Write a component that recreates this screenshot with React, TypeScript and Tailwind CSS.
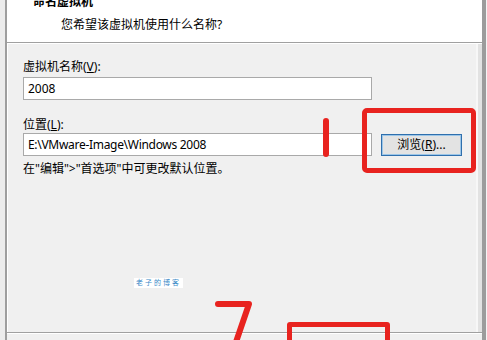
import React from "react";

const font = { fontFamily: '"Noto Sans", "Noto Sans CJK SC", sans-serif' };

export default function App() {
  return (
    <div
      className="relative w-[487px] h-[340px] overflow-hidden bg-[#ececec] text-[12px] text-black"
      style={font}
    >
      <div className="absolute inset-0 flex">
        <div className="w-[5px] bg-[#ececec]" />
        <div className="flex w-[477px] flex-col border-l-2 border-[#9e9e9e]">
          <div className="flex flex-1 flex-col">
            {/* header */}
            <div className="flex h-[42px] flex-col bg-white pr-[6px]">
              <div className="mt-[-6px] pl-[26px] font-bold leading-[16px]">命名虚拟机</div>
              <div className="mt-[7px] pl-[54px] leading-[16px]">您希望该虚拟机使用什么名称?</div>
            </div>
            <div className="h-px bg-[#a0a0a0]" />
            <div className="h-px bg-white" />
            {/* body */}
            <div className="flex flex-1">
              <div className="w-px bg-white" />
              <div className="flex flex-1 flex-col bg-[#f0f0f0] pl-[15px] pt-[15px]">
                <div className="leading-[16px]">
                  虚拟机名称(<span className="underline">V</span>):
                </div>
                <div className="mt-[2px] flex h-[23px] w-[349px] items-center border border-[#a9a9a9] bg-white pl-[4px]">
                  2008
                </div>
                <div className="mt-[17px] leading-[16px]">
                  位置(<span className="underline">L</span>):
                </div>
                <div className="flex items-center">
                  <div className="flex h-[23px] w-[349px] items-center border border-[#a9a9a9] bg-white pl-[4px] tracking-[-0.3px]">
                    E:\VMware-Image\Windows 2008
                  </div>
                  <div className="ml-[9px] mt-[1px] flex h-[22px] w-[81px] items-center justify-center border border-[#2f6fad] bg-[#e3e3e3] shadow-[inset_0_0_0_1px_#9cc6e8]">
                    浏览(<span className="underline">R</span>)...
                  </div>
                </div>
                <div className="mt-[5px] leading-[16px]">在"编辑"&gt;"首选项"中可更改默认位置。</div>
              </div>
              <div className="w-[2px] bg-[#f7f7f7]" />
              <div className="w-[4px] bg-[#e2e2e2]" />
            </div>
            <div className="h-px bg-[#a0a0a0]" />
            <div className="h-px bg-white" />
            <div className="h-[6px] bg-[#f0f0f0]" />
          </div>
        </div>
        <div className="w-[4px] bg-[#9c9c9c]" />
        <div className="flex-1 bg-[#f4f4f4]" />
      </div>

      {/* watermark */}
      <div className="absolute left-[134px] top-[278px] bg-white px-[2px] text-[7px] leading-[10px] tracking-[2px] text-[#3a8ac8]">
        老子的博客
      </div>

      {/* red annotations */}
      <div className="absolute left-[323px] top-[118px] h-[39px] w-[6px] rounded-full bg-[#e8231f]" />
      <div className="absolute left-[362px] top-[108px] h-[65px] w-[114px] rounded-[5px] border-[5px] border-[#e8231f]" />
      <div className="absolute left-[287px] top-[322px] h-[40px] w-[103px] rounded-[3px] border-[5px] border-[#e8231f]" />
      <svg className="absolute left-[214px] top-[298px]" width="40" height="42" viewBox="0 0 40 42">
        <path d="M4 6 L35 6 L22 44" fill="none" stroke="#e8231f" strokeWidth="6" strokeLinejoin="round" strokeLinecap="round" />
      </svg>
    </div>
  );
}
